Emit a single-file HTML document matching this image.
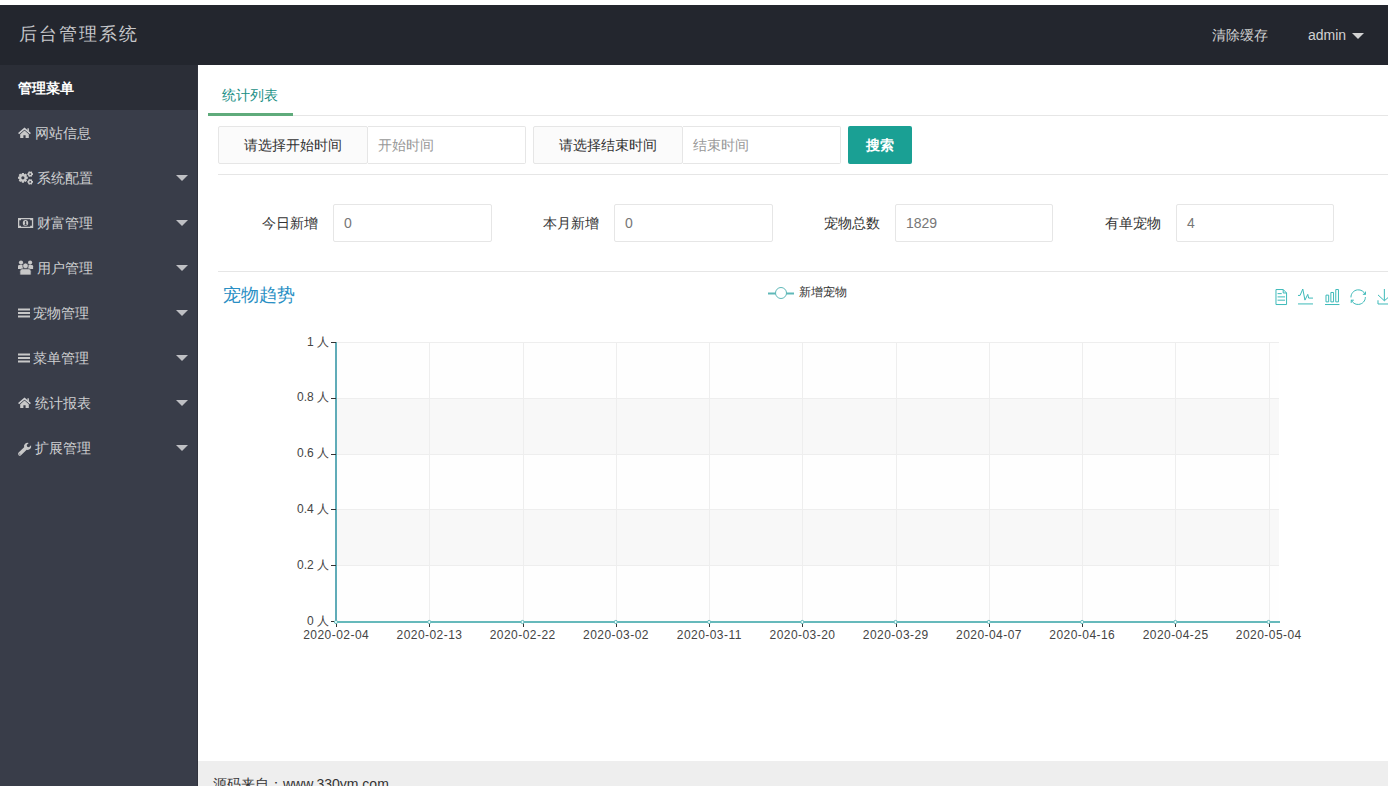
<!DOCTYPE html>
<html><head><meta charset="utf-8">
<style>
*{margin:0;padding:0;box-sizing:border-box}
html,body{width:1388px;height:786px;overflow:hidden;background:#fff;font-family:"Liberation Sans",sans-serif;font-size:14px;color:#666}
.a{position:absolute;white-space:nowrap}
#hd{position:absolute;left:0;top:5px;width:1388px;height:60px;background:#23262E}
#logo{left:19px;top:22px;font-size:18px;line-height:24px;color:#c6c7ca;letter-spacing:2px}
#side{position:absolute;left:0;top:65px;width:198px;height:721px;background:#393D49;border-right:1px solid #30333d}
#sideTop{position:absolute;left:0;top:65px;width:197px;height:45px;background:#2B2E37}
.mi{position:absolute;left:18px;height:20px;line-height:20px;color:#cfd0d2;font-size:14px}
.mt{font-weight:bold;color:#fff}
.arr{position:absolute;left:176px;width:0;height:0;border-left:6px solid transparent;border-right:6px solid transparent;border-top:6px solid #bfc0c4}
#foot{position:absolute;left:198px;top:761px;width:1190px;height:44px;background:#eee}
.box{position:absolute;border:1px solid #e6e6e6;border-radius:2px;height:38px}
.lab{background:#FBFBFB;color:#333;text-align:center;line-height:36px}
.inp{background:#fff;color:#999;line-height:36px;padding-left:10px}
.hr{position:absolute;height:1px;background:#e6e6e6}
.sl{position:absolute;color:#333;line-height:20px}
</style></head><body>
<div id="hd"></div>
<div class="a" id="logo">后台管理系统</div>
<div class="a" style="left:1212px;top:25px;color:#d2d2d2;line-height:20px">清除缓存</div>
<div class="a" style="left:1308px;top:25px;color:#d2d2d2;line-height:20px">admin</div>
<div class="a" style="left:1352px;top:33px;width:0;height:0;border-left:6px solid transparent;border-right:6px solid transparent;border-top:6px solid #d2d2d2"></div>

<div id="side"></div>
<div id="sideTop"></div>
<div class="mi mt" style="top:78px">管理菜单</div>
<div class="mi" style="top:123px;left:35px">网站信息</div>
<div class="mi" style="top:168px;left:37px">系统配置</div>
<div class="mi" style="top:213px;left:37px">财富管理</div>
<div class="mi" style="top:258px;left:37px">用户管理</div>
<div class="mi" style="top:303px;left:33px">宠物管理</div>
<div class="mi" style="top:348px;left:33px">菜单管理</div>
<div class="mi" style="top:393px;left:35px">统计报表</div>
<div class="mi" style="top:438px;left:35px">扩展管理</div>
<div class="arr" style="top:175px"></div><div class="arr" style="top:220px"></div><div class="arr" style="top:265px"></div><div class="arr" style="top:310px"></div><div class="arr" style="top:355px"></div><div class="arr" style="top:400px"></div><div class="arr" style="top:445px"></div><svg class="a" style="left:0;top:0" width="198" height="786" fill="#c8c8c8"><g transform="translate(0,0)"><polyline points="18.6,133.6 24.5,128.6 30.4,133.6" fill="none" stroke="#cfd0d2" stroke-width="1.5"/><rect x="27.4" y="128.3" width="1.5" height="3"/><path d="M20.2,134.2 L24.5,130.6 L28.8,134.2 L28.8,138 L25.6,138 L25.6,135.2 L23.4,135.2 L23.4,138 L20.2,138 Z"/></g><g transform="translate(0,270)"><polyline points="18.6,133.6 24.5,128.6 30.4,133.6" fill="none" stroke="#cfd0d2" stroke-width="1.5"/><rect x="27.4" y="128.3" width="1.5" height="3"/><path d="M20.2,134.2 L24.5,130.6 L28.8,134.2 L28.8,138 L25.6,138 L25.6,135.2 L23.4,135.2 L23.4,138 L20.2,138 Z"/></g><rect x="18" y="308.5" width="12" height="2"/><rect x="18" y="312.0" width="12" height="2"/><rect x="18" y="315.5" width="12" height="2"/><rect x="18" y="353.5" width="12" height="2"/><rect x="18" y="357.0" width="12" height="2"/><rect x="18" y="360.5" width="12" height="2"/><polygon points="26.39,176.57 27.79,176.78 27.79,178.82 26.39,179.03 26.24,179.40 27.08,180.54 25.64,181.98 24.50,181.14 24.13,181.29 23.92,182.69 21.88,182.69 21.67,181.29 21.30,181.14 20.16,181.98 18.72,180.54 19.56,179.40 19.41,179.03 18.01,178.82 18.01,176.78 19.41,176.57 19.56,176.20 18.72,175.06 20.16,173.62 21.30,174.46 21.67,174.31 21.88,172.91 23.92,172.91 24.13,174.31 24.50,174.46 25.64,173.62 27.08,175.06 26.24,176.20"/><circle cx="22.9" cy="177.8" r="3.63"/><circle cx="22.9" cy="177.8" r="1.6" fill="#393D49"/><polygon points="32.13,173.16 32.99,173.31 32.99,174.89 32.13,175.04 31.98,175.30 32.28,176.12 30.91,176.91 30.35,176.24 30.05,176.24 29.49,176.91 28.12,176.12 28.42,175.30 28.27,175.04 27.41,174.89 27.41,173.31 28.27,173.16 28.42,172.90 28.12,172.08 29.49,171.29 30.05,171.96 30.35,171.96 30.91,171.29 32.28,172.08 31.98,172.90"/><circle cx="30.2" cy="174.1" r="2.10"/><circle cx="30.2" cy="174.1" r="0.9" fill="#393D49"/><polygon points="32.13,180.96 32.99,181.11 32.99,182.69 32.13,182.84 31.98,183.10 32.28,183.92 30.91,184.71 30.35,184.04 30.05,184.04 29.49,184.71 28.12,183.92 28.42,183.10 28.27,182.84 27.41,182.69 27.41,181.11 28.27,180.96 28.42,180.70 28.12,179.88 29.49,179.09 30.05,179.76 30.35,179.76 30.91,179.09 32.28,179.88 31.98,180.70"/><circle cx="30.2" cy="181.9" r="2.10"/><circle cx="30.2" cy="181.9" r="0.9" fill="#393D49"/><rect x="18" y="218" width="15.2" height="10"/><path d="M19.3,220.3 H21 V219.2 H30.2 V220.3 H31.9 V225.7 H30.2 V226.8 H21 V225.7 H19.3 Z" fill="#393D49"/><ellipse cx="25.5" cy="223.1" rx="2.7" ry="3"/><path d="M24.6,221.9 L25.4,221.1 H26.2 V224.6 H26.9 V225.3 H24.3 V224.6 H25.1 V222.3 L24.8,222.5 Z" fill="#393D49"/><circle cx="21" cy="262.6" r="2.1"/><circle cx="30.1" cy="262.6" r="2.1"/><path d="M18,269 V266.3 Q18,265 19.3,265 H23 V269 Z"/><path d="M33.1,269 V266.3 Q33.1,265 31.8,265 H28.1 V269 Z"/><circle cx="25.5" cy="265.9" r="2.8" stroke="#393D49" stroke-width="0.7"/><path d="M19.9,275 V271.2 Q19.9,268.8 22.3,268.8 H28.7 Q31.1,268.8 31.1,271.2 V275 Z" stroke="#393D49" stroke-width="0.7"/><g transform="translate(18.6,455) scale(0.92) translate(-18.6,-455)"><path d="M18.6,452.4 L24.6,446.6 A3.9,3.9 0 0 1 29.6,441.9 L27.4,444.1 L27.9,446.1 L29.9,446.6 L32.1,444.4 A3.9,3.9 0 0 1 27.4,449.4 L21.2,455.2 Q19.8,456.4 18.6,455.2 Q17.4,453.8 18.6,452.4 Z"/><circle cx="19.9" cy="453.9" r="0.6" fill="#393D49"/></g></svg>
<div class="a" style="left:222px;top:85px;color:#1a8f85;line-height:20px">统计列表</div>
<div class="hr" style="left:208px;top:115px;width:1180px"></div>
<div class="a" style="left:208px;top:113px;width:85px;height:3px;background:#5fab7b"></div>
<div class="box lab" style="left:218px;top:126px;width:150px">请选择开始时间</div>
<div class="box inp" style="left:368px;top:126px;width:158px;border-left:none;border-radius:0 2px 2px 0">开始时间</div>
<div class="box lab" style="left:533px;top:126px;width:150px">请选择结束时间</div>
<div class="box inp" style="left:683px;top:126px;width:158px;border-left:none;border-radius:0 2px 2px 0">结束时间</div>
<div class="a" style="left:848px;top:126px;width:64px;height:38px;background:#1aa094;border-radius:2px;color:#fff;font-weight:bold;text-align:center;line-height:38px">搜索</div>
<div class="hr" style="left:218px;top:174px;width:1170px"></div>
<div class="sl" style="left:262px;top:213px">今日新增</div>
<div class="box inp" style="left:333px;top:204px;width:159px;color:#777">0</div>
<div class="sl" style="left:543px;top:213px">本月新增</div>
<div class="box inp" style="left:614px;top:204px;width:159px;color:#777">0</div>
<div class="sl" style="left:824px;top:213px">宠物总数</div>
<div class="box inp" style="left:895px;top:204px;width:158px;color:#777">1829</div>
<div class="sl" style="left:1105px;top:213px">有单宠物</div>
<div class="box inp" style="left:1176px;top:204px;width:158px;color:#777">4</div>
<div class="hr" style="left:218px;top:271px;width:1170px"></div>
<svg class="a" style="left:0;top:0" width="1388" height="786" font-family="Liberation Sans, sans-serif" font-size="12" fill="#444">
<rect x="336" y="565" width="943" height="56" fill="#FEFEFE"/>
<rect x="336" y="509" width="943" height="56" fill="#F8F8F8"/>
<rect x="336" y="454" width="943" height="55" fill="#FEFEFE"/>
<rect x="336" y="398" width="943" height="56" fill="#F8F8F8"/>
<rect x="336" y="342" width="943" height="56" fill="#FEFEFE"/>
<line x1="336" x2="1279" y1="565.5" y2="565.5" stroke="#eee"/>
<line x1="336" x2="1279" y1="509.5" y2="509.5" stroke="#eee"/>
<line x1="336" x2="1279" y1="454.5" y2="454.5" stroke="#eee"/>
<line x1="336" x2="1279" y1="398.5" y2="398.5" stroke="#eee"/>
<line x1="336" x2="1279" y1="342.5" y2="342.5" stroke="#eee"/>
<line x1="429.5" x2="429.5" y1="342" y2="621" stroke="#eee"/>
<line x1="523.5" x2="523.5" y1="342" y2="621" stroke="#eee"/>
<line x1="616.5" x2="616.5" y1="342" y2="621" stroke="#eee"/>
<line x1="709.5" x2="709.5" y1="342" y2="621" stroke="#eee"/>
<line x1="802.5" x2="802.5" y1="342" y2="621" stroke="#eee"/>
<line x1="896.5" x2="896.5" y1="342" y2="621" stroke="#eee"/>
<line x1="989.5" x2="989.5" y1="342" y2="621" stroke="#eee"/>
<line x1="1082.5" x2="1082.5" y1="342" y2="621" stroke="#eee"/>
<line x1="1175.5" x2="1175.5" y1="342" y2="621" stroke="#eee"/>
<line x1="1269.5" x2="1269.5" y1="342" y2="621" stroke="#eee"/>
<line x1="336" x2="336" y1="342" y2="622" stroke="#60acb8" stroke-width="2"/>
<line x1="331" x2="336" y1="621.5" y2="621.5" stroke="#333"/>
<line x1="331" x2="336" y1="565.5" y2="565.5" stroke="#333"/>
<line x1="331" x2="336" y1="509.5" y2="509.5" stroke="#333"/>
<line x1="331" x2="336" y1="454.5" y2="454.5" stroke="#333"/>
<line x1="331" x2="336" y1="398.5" y2="398.5" stroke="#333"/>
<line x1="331" x2="336" y1="342.5" y2="342.5" stroke="#333"/>
<text x="329" y="624.5" text-anchor="end">0 人</text>
<text x="329" y="568.7" text-anchor="end">0.2 人</text>
<text x="329" y="512.9" text-anchor="end">0.4 人</text>
<text x="329" y="457.1" text-anchor="end">0.6 人</text>
<text x="329" y="401.3" text-anchor="end">0.8 人</text>
<text x="329" y="345.5" text-anchor="end">1 人</text>
<line x1="336.5" x2="336.5" y1="622" y2="627" stroke="#333"/>
<line x1="429.5" x2="429.5" y1="622" y2="627" stroke="#333"/>
<line x1="523.5" x2="523.5" y1="622" y2="627" stroke="#333"/>
<line x1="616.5" x2="616.5" y1="622" y2="627" stroke="#333"/>
<line x1="709.5" x2="709.5" y1="622" y2="627" stroke="#333"/>
<line x1="802.5" x2="802.5" y1="622" y2="627" stroke="#333"/>
<line x1="896.5" x2="896.5" y1="622" y2="627" stroke="#333"/>
<line x1="989.5" x2="989.5" y1="622" y2="627" stroke="#333"/>
<line x1="1082.5" x2="1082.5" y1="622" y2="627" stroke="#333"/>
<line x1="1175.5" x2="1175.5" y1="622" y2="627" stroke="#333"/>
<line x1="1269.5" x2="1269.5" y1="622" y2="627" stroke="#333"/>
<text x="336.2" y="639" text-anchor="middle" letter-spacing="0.45">2020-02-04</text>
<text x="429.5" y="639" text-anchor="middle" letter-spacing="0.45">2020-02-13</text>
<text x="522.7" y="639" text-anchor="middle" letter-spacing="0.45">2020-02-22</text>
<text x="616.0" y="639" text-anchor="middle" letter-spacing="0.45">2020-03-02</text>
<text x="709.3" y="639" text-anchor="middle" letter-spacing="0.45">2020-03-11</text>
<text x="802.5" y="639" text-anchor="middle" letter-spacing="0.45">2020-03-20</text>
<text x="895.8" y="639" text-anchor="middle" letter-spacing="0.45">2020-03-29</text>
<text x="989.0" y="639" text-anchor="middle" letter-spacing="0.45">2020-04-07</text>
<text x="1082.3" y="639" text-anchor="middle" letter-spacing="0.45">2020-04-16</text>
<text x="1175.6" y="639" text-anchor="middle" letter-spacing="0.45">2020-04-25</text>
<text x="1268.8" y="639" text-anchor="middle" letter-spacing="0.45">2020-05-04</text>
<line x1="336" x2="1280" y1="622" y2="622" stroke="#66b9bb" stroke-width="2"/>
<circle cx="336.0" cy="622" r="1.6" fill="#e8ffff" stroke="#66b9bb" stroke-width="1"/>
<circle cx="429.3" cy="622" r="1.6" fill="#e8ffff" stroke="#66b9bb" stroke-width="1"/>
<circle cx="522.5" cy="622" r="1.6" fill="#e8ffff" stroke="#66b9bb" stroke-width="1"/>
<circle cx="615.8" cy="622" r="1.6" fill="#e8ffff" stroke="#66b9bb" stroke-width="1"/>
<circle cx="709.1" cy="622" r="1.6" fill="#e8ffff" stroke="#66b9bb" stroke-width="1"/>
<circle cx="802.3" cy="622" r="1.6" fill="#e8ffff" stroke="#66b9bb" stroke-width="1"/>
<circle cx="895.6" cy="622" r="1.6" fill="#e8ffff" stroke="#66b9bb" stroke-width="1"/>
<circle cx="988.8" cy="622" r="1.6" fill="#e8ffff" stroke="#66b9bb" stroke-width="1"/>
<circle cx="1082.1" cy="622" r="1.6" fill="#e8ffff" stroke="#66b9bb" stroke-width="1"/>
<circle cx="1175.4" cy="622" r="1.6" fill="#e8ffff" stroke="#66b9bb" stroke-width="1"/>
<circle cx="1268.6" cy="622" r="1.6" fill="#e8ffff" stroke="#66b9bb" stroke-width="1"/>
<g fill="none" stroke="#3dbab9" stroke-width="1">
<path transform="translate(1272.9,289) scale(0.268)" vector-effect="non-scaling-stroke" d="M17.5,17.3H33 M45.4,29.5h-28 M11.5,2v56H51V14.8L38.4,2H11.5z M38.4,2.2v12.7H51 M45.4,41.7h-28"/>
<path transform="translate(1296.8,287) scale(0.2918)" vector-effect="non-scaling-stroke" d="M4.1,28.9h7.1l9.3-22l7.4,38l9.7-19.7l3,12.8h14.9M4.1,58h51.4"/>
<path transform="translate(1324.2,289) scale(0.268)" vector-effect="non-scaling-stroke" d="M6.7,22.9h10V48h-10V22.9zM24.9,13h10v35h-10V13zM43.2,2h10v46h-10V2zM3.1,58h53.7"/>
<path transform="translate(1350.4,289.3) scale(0.265)" vector-effect="non-scaling-stroke" d="M47,18.9h9.8V8.7 M56.3,20.1 C52.1,9,40.5,0.6,26.8,2.1C12.6,3.7,1.6,16.2,2.1,30.6 M13,41.1H3.1v10.2 M3.7,39.8c3.6,10.6,14.1,18.7,27.5,17.3c14.6-1.5,25.5-13.3,25.2-27.7"/>
<path transform="translate(1376.8,289) scale(0.2586)" vector-effect="non-scaling-stroke" d="M4.7,22.9L29.3,45.5L54.7,23.4M4.6,43.6L4.6,58L53.8,58L53.8,43.6M29.2,45.1L29.2,0"/>
</g>
<line x1="768" x2="794" y1="293.5" y2="293.5" stroke="#5fb8b8" stroke-width="2"/>
<circle cx="781" cy="293" r="5.5" fill="#fff" stroke="#5fb8b8" stroke-width="1"/>
<text x="799" y="295.5" font-size="12" fill="#333">新增宠物</text>
<text x="223" y="301" font-size="18" fill="#2a8fc4">宠物趋势</text>
</svg>
<div id="foot"></div>
<div class="a" style="left:213px;top:774px;color:#333;line-height:20px">源码来自：www.330ym.com</div>
</body></html>
